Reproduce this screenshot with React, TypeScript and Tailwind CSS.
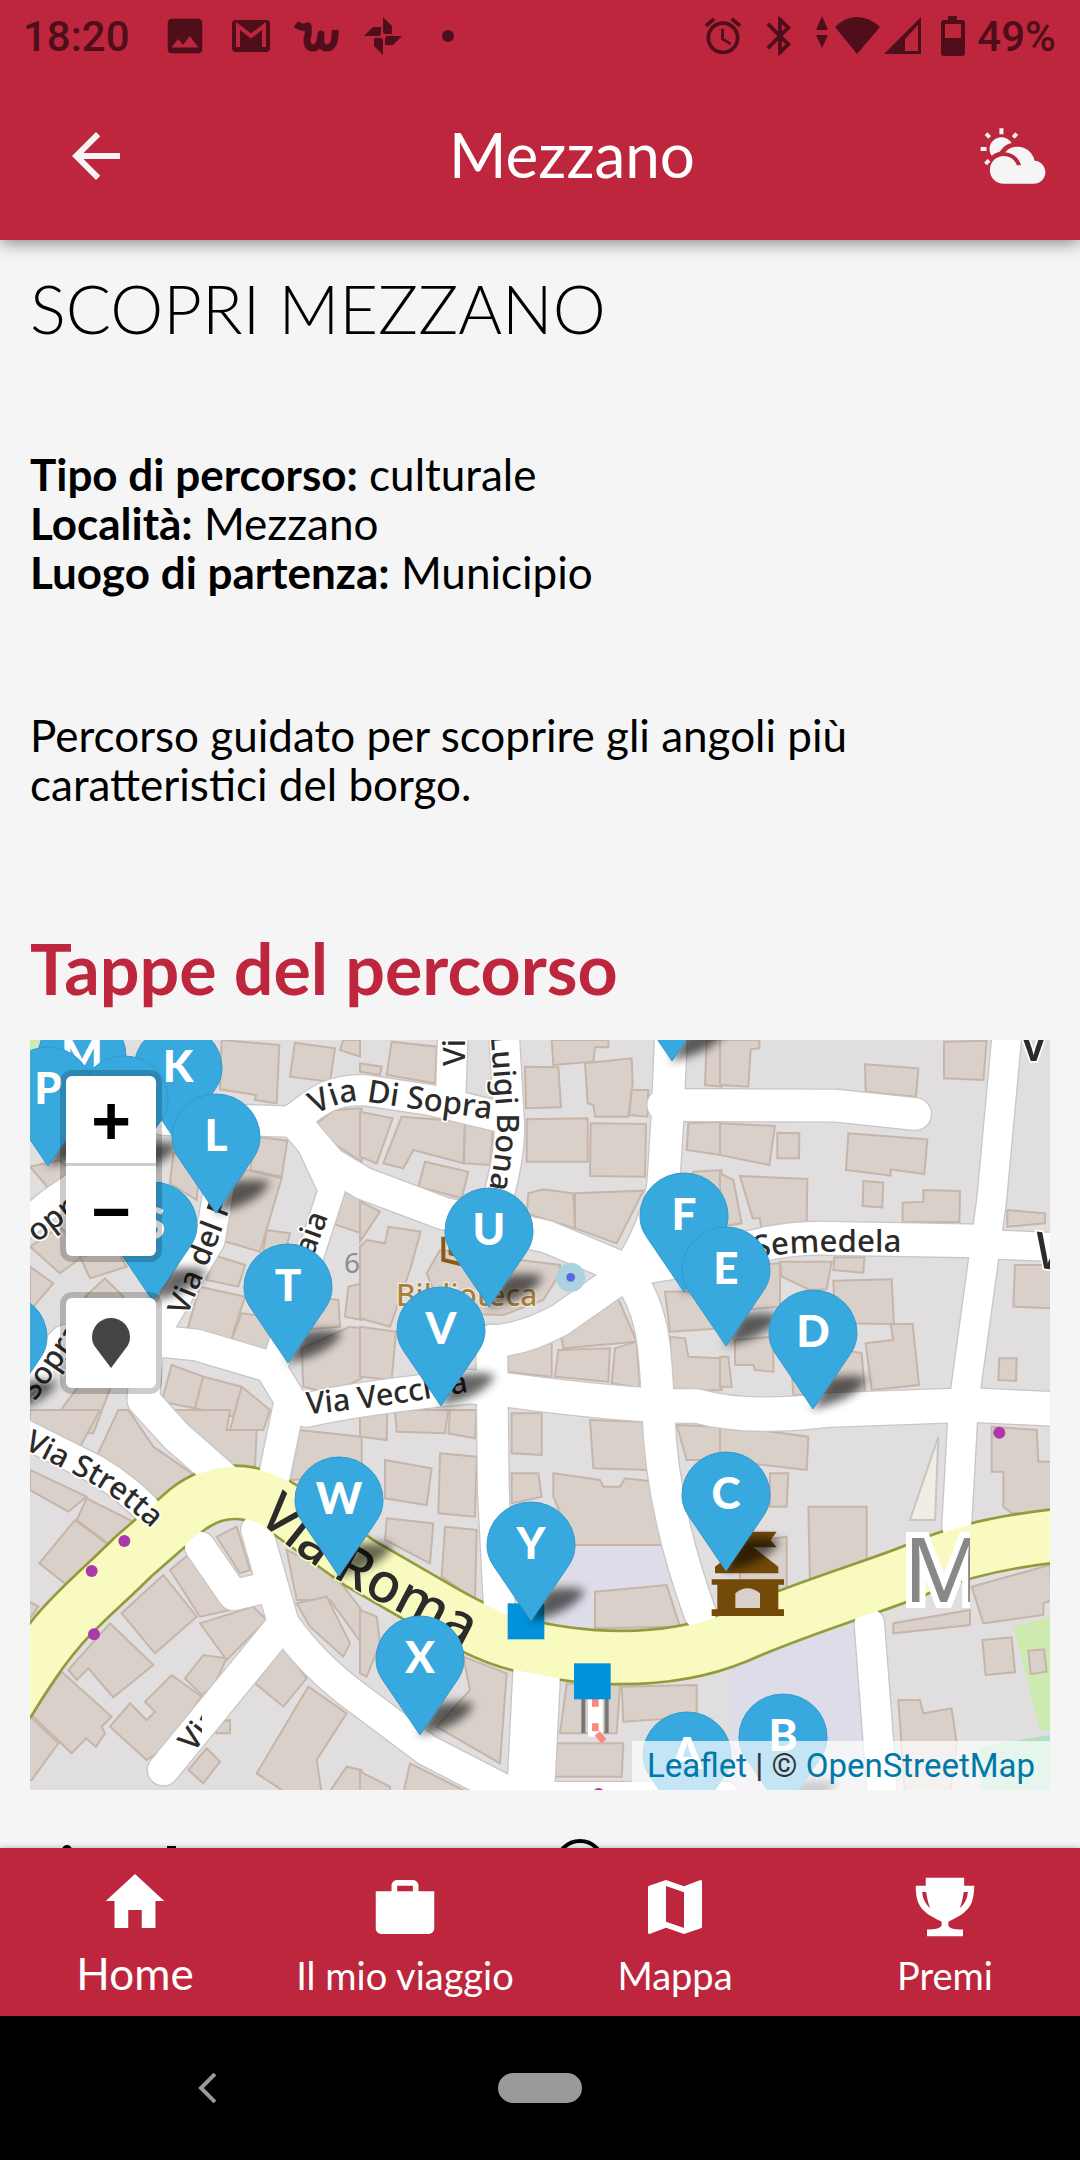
import type { ReactNode } from 'react';
import { IoMdBriefcase, IoMdHome, IoMdMap, IoMdPartlySunny, IoMdTrophy } from 'react-icons/io';
import { MdAlarm, MdArrowBack, MdBluetooth, MdImage } from 'react-icons/md';

interface Stop {
  letter: string;
  x: number;
  y: number;
}

interface Tile {
  x: number;
  y: number;
  buildings: string[];
}

// Map drawing units, three per pixel at full width
const MAP_W = 3060;
const MAP_H = 2250;

// x / y is the tip of each pin, in a 1020 x 750 map
const stops: Stop[] = [
  { letter: '', x: 642, y: 21 },
  { letter: 'M', x: 52, y: 92 },
  { letter: 'K', x: 148, y: 104 },
  { letter: 'P', x: 18, y: 126 },
  { letter: '', x: 94, y: 135 },
  { letter: 'L', x: 186, y: 173 },
  { letter: 'F', x: 654, y: 252 },
  { letter: 'S', x: 123, y: 261 },
  { letter: 'U', x: 459, y: 267 },
  { letter: 'E', x: 696, y: 306 },
  { letter: 'T', x: 258, y: 323 },
  { letter: 'V', x: 411, y: 366 },
  { letter: 'D', x: 783, y: 369 },
  { letter: '', x: -27, y: 373 },
  { letter: 'C', x: 696, y: 531 },
  { letter: 'W', x: 309, y: 536 },
  { letter: 'Y', x: 501, y: 581 },
  { letter: 'X', x: 390, y: 695 },
  { letter: 'B', x: 753, y: 773 },
  { letter: 'A', x: 657, y: 791 },
];

const tiles: Tile[] = [
  {
    x: -90,
    y: -60,
    buildings: [
      '665,60 838,75 830,250 765,240 768,225 660,208',
      '885,68 1005,85 990,185 870,170',
      '1030,60 1080,60 1080,110 1020,90',
      '945,315 1000,270 1085,265 1085,425 1000,370',
      '770,350 862,362 845,470 750,450',
      '520,400 600,420 590,540 510,490',
      '740,450 845,475 780,695 660,660 700,500',
      '800,630 870,640 850,720 790,690',
      '640,705 735,735 715,800 620,780',
      '600,800 735,830 690,970 560,935',
      '725,880 800,890 860,1000 800,1015 690,970',
      '1030,515 1085,530 1085,640 995,610',
      '1045,800 1085,790 1085,900 1035,890',
      '940,830 1015,840 1020,920 900,930',
      '905,985 1050,920 1085,925 1085,1075 990,1120 910,1100',
      '515,1035 610,1070 585,1165 485,1145',
      '610,1070 725,1100 700,1190 585,1165',
      '725,1100 810,1170 790,1230 690,1230',
      '90,680 180,620 260,700 180,760',
      '240,710 350,690 380,740 270,775',
      '90,740 160,790 100,860 90,860',
      '255,830 315,775 370,830 340,870',
      '90,440 180,420 240,480 150,510',
      '130,1240 250,1080 340,1080 280,1240',
    ],
  },
  {
    x: 990,
    y: -60,
    buildings: [
      '95,65 230,80 225,190 80,165',
      '0,130 65,140 60,165 0,155',
      '575,60 745,60 745,82 705,82 700,125 580,135',
      '495,140 595,142 603,262 498,265',
      '675,130 815,115 818,190 805,290 705,290 700,255 683,250',
      '815,210 865,210 862,290 808,285',
      '500,298 683,295 683,425 500,425',
      '692,310 858,312 855,470 690,468',
      '0,275 98,295 50,430 0,410',
      '125,290 315,305 310,430 160,390 130,445 70,430',
      '315,310 400,315 390,435 312,430',
      '195,425 325,455 305,535 175,500',
      '505,520 550,508 640,520 645,625 500,580',
      '645,520 850,512 770,670 645,625',
      '0,545 60,575 0,665',
      '85,620 182,635 150,750 90,920 0,895 0,680 20,660 75,670',
      '240,690 600,735 600,760 550,840 430,885 250,880 200,760',
      '0,920 108,935 95,1080 0,1070',
      '600,930 770,825 830,965 610,985',
      '438,990 575,955 575,1070 438,1055',
      '595,990 750,985 745,1085 585,1070',
      '765,985 830,965 840,1105 755,1090',
      '985,310 1085,305 1085,405 980,390',
      '1040,60 1085,60 1085,200 1035,195',
      '1000,455 1085,450 1085,620 960,640',
      '915,815 1085,815 1085,925 930,935',
      '930,950 975,955 985,1010 1085,1015 1085,1110 935,1115',
    ],
  },
  {
    x: 2070,
    y: -60,
    buildings: [
      '0,60 118,60 118,85 92,88 85,200 0,195',
      '435,133 595,145 588,230 437,215',
      '672,65 800,62 790,180 672,175',
      '0,310 165,318 148,435 0,405',
      '172,338 238,340 237,415 172,415',
      '385,340 622,358 613,462 512,448 512,467 378,450',
      '430,483 490,488 487,562 428,558',
      '548,548 610,545 610,510 720,513 718,606 548,606',
      '60,468 262,477 260,606 125,640 120,595 98,595',
      '0,460 40,480 65,610 0,620',
      '180,725 335,725 320,808 270,810 185,770',
      '343,712 433,712 430,758 340,750',
      '340,782 515,778 522,912 345,910',
      '100,735 180,730 180,860 60,870',
      '437,970 520,960 512,912 578,912 597,1095 455,1110',
      '45,960 160,950 160,1055 105,1050 100,1035 45,1035',
      '0,1010 25,1010 35,1100 0,1100',
      '215,1050 380,990 425,1000 435,1120 220,1125',
      '862,570 975,580 975,610 862,620',
      '885,735 995,735 995,865 880,860',
      '838,1015 890,1015 888,1083 835,1080',
    ],
  },
  {
    x: -90,
    y: 1110,
    buildings: [
      '90,0 300,0 235,120 90,50',
      '355,0 385,0 460,110 590,200 490,280 290,140',
      '90,180 260,260 205,305 90,240',
      '260,265 420,345 330,405 230,330',
      '225,330 330,408 200,525 118,460',
      '80,570 115,590 80,640',
      '365,610 490,495 590,620 465,730',
      '510,480 570,430 690,600 600,620',
      '205,780 330,640 460,765 340,862 265,775 230,810',
      '95,915 185,785 335,920 305,950 315,970 288,1010 258,985 215,1030',
      '80,910 175,1000 95,1110 80,1110',
      '330,950 390,880 440,930 465,905 435,875 515,795 605,860 500,1010 440,1050',
      '555,805 610,735 680,745 640,830 605,855',
      '600,640 760,590 800,630 680,750',
      '565,1080 620,1015 660,1055 610,1120',
      '765,820 850,710 920,805 850,890',
      '640,940 690,930 690,970 650,970',
      '860,420 1000,490 1085,600 1085,700 990,570 890,570',
      '890,580 980,560 1050,700 1030,740 930,650',
      '925,830 1040,910 950,1050 965,1150 860,1150 770,1090',
      '985,1150 1040,1070 1085,1080 1085,1150',
      '520,0 690,0 680,60 770,60 765,170 670,170 540,50',
      '895,60 1085,80 1085,200 870,210',
      '650,380 710,350 750,480 720,490',
    ],
  },
  {
    x: 990,
    y: 1110,
    buildings: [
      '0,10 82,10 80,90 0,80',
      '105,0 265,0 255,70 110,65',
      '270,0 350,0 345,85 265,70',
      '455,10 545,10 545,135 455,130',
      '690,30 850,35 865,180 700,175',
      '950,45 1085,50 1085,150 980,150',
      '75,150 215,175 200,285 75,265',
      '240,130 350,140 345,320 235,310',
      '455,190 535,190 545,260 455,280',
      '580,190 720,210 730,230 780,230 795,205 885,215 940,330 935,405 640,405 580,260',
      '80,325 220,340 210,460 75,390',
      '255,350 350,360 345,570 245,500',
      '705,545 920,525 960,650 705,655',
      '0,600 50,620 60,700 20,800 0,790',
      '310,740 440,790 420,1060 230,950 330,840',
      '620,820 780,825 770,970 600,970',
      '785,830 1010,825 1010,920 790,935',
      '590,1000 790,1000 785,1100 580,1100',
      '0,1085 90,1130 90,1150 0,1150',
      '150,1060 330,1150 130,1150',
    ],
  },
  {
    x: 2070,
    y: 1110,
    buildings: [
      '0,45 265,80 260,180 0,150',
      '150,190 205,190 200,290 150,290',
      '265,290 440,290 440,450 270,520',
      '60,400 200,380 200,540 60,540',
      '815,50 950,60 955,155 995,155 995,305 875,310 850,290 850,185 815,185',
      '520,640 750,600 750,645 520,670',
      '755,530 990,465 995,570 970,580 970,615 790,640',
      '787,690 875,682 885,787 797,795',
      '925,722 972,718 980,785 932,792',
      '535,870 600,870 610,910 695,895 710,1000 690,1150 555,1150',
    ],
  },
];

const roads: { d: string; width: number }[] = [
  { d: 'M400,240 L640,240 L780,245 C850,200 880,150 1000,150 L1200,180 L1400,228', width: 90 },
  { d: 'M1420,-60 L1438,250 Q1442,340 1400,490', width: 88 },
  { d: 'M1270,-60 L1262,170', width: 88 },
  { d: 'M790,240 L900,370 L1000,430 L1240,520 L1550,590 L1790,690', width: 95 },
  { d: 'M1790,700 L1590,840 Q1480,900 1380,905', width: 95 },
  { d: 'M1925,-60 L1912,240 L1900,430 Q1880,560 1790,700', width: 95 },
  { d: 'M1900,195 L2420,197 L2655,222', width: 95 },
  { d: 'M1790,690 L2100,640 Q2250,590 2400,595 L2850,603', width: 98 },
  { d: 'M2935,-60 L2885,480 L2800,1100 L2780,1460', width: 86 },
  { d: 'M2850,612 L3100,622', width: 84 },
  { d: 'M1790,700 C1880,820 1875,950 1885,1110 C1890,1300 1930,1500 2010,1720', width: 95 },
  { d: 'M830,1110 Q1010,1070 1320,1040 L1430,1050 Q1800,1100 2000,1098 Q2150,1140 2400,1110 L2820,1095 L3100,1108', width: 100 },
  { d: 'M340,940 L540,600 L600,250', width: 88 },
  { d: 'M740,960 L905,450 L830,290', width: 78 },
  { d: 'M260,890 L500,915 L720,980 L780,1080 L720,1370', width: 92 },
  { d: 'M350,950 L340,1080 L440,1190 L600,1330', width: 95 },
  { d: 'M1385,900 L1390,1350 L1410,1740', width: 92 },
  { d: 'M1522,1860 L1500,2300', width: 140 },
  { d: 'M680,1470 L760,1750 Q850,1880 990,1980 L1190,2130 L1480,2280', width: 92 },
  { d: 'M510,1520 L610,1665 L720,1640', width: 90 },
  { d: 'M760,1750 L400,2190', width: 92 },
  { d: 'M-60,590 L60,490 L250,360', width: 84 },
  { d: 'M-60,1070 L100,900 L330,830', width: 84 },
  { d: 'M-60,1160 L200,1290 Q300,1350 370,1430', width: 84 },
  { d: 'M2518,1750 L2560,2300', width: 88 },
  { d: 'M1500,2256 L2090,2256', width: 60 },
];

const mainRoad =
  'M-60,1980 C90,1730 160,1700 310,1550 L470,1410 C560,1340 660,1340 760,1405 L990,1570 L1190,1685 C1350,1780 1450,1830 1690,1850 C1850,1860 2000,1840 2120,1790 C2320,1700 2600,1620 2680,1580 Q2850,1510 3100,1485';

const purpleDots = [
  [283, 1503],
  [185, 1593],
  [192, 1783],
  [2908, 1178],
];

const streetLabels: { id: string; d: string; name: string; size: number }[] = [
  { id: 'sopra', d: 'M856,225 Q930,180 1000,183 Q1200,215 1450,245', name: 'Via Di Sopra', size: 94 },
  { id: 'bona', d: 'M1382,-16 L1398,200 Q1408,330 1365,500', name: 'Luigi Bona', size: 92 },
  { id: 'vi', d: 'M1305,78 L1305,-200', name: 'Via', size: 92 },
  { id: 'del', d: 'M470,830 L560,610 L660,350', name: 'Via del P', size: 92 },
  { id: 'aia', d: 'M850,650 L930,430', name: 'aia', size: 92 },
  { id: 'opra', d: 'M20,610 L190,480', name: 'opra', size: 92 },
  { id: 'sopra-left', d: 'M15,1085 L180,850', name: 'Sopra', size: 92 },
  { id: 'vecchia', d: 'M830,1122 Q1010,1112 1400,1040', name: 'Via Vecchia', size: 92 },
  { id: 'stretta', d: 'M-20,1225 L150,1312 Q270,1370 400,1500', name: 'Via Stretta', size: 92 },
  { id: 'roma', d: 'M680,1435 Q820,1570 990,1655 L1400,1870', name: 'Via Roma', size: 165 },
  { id: 'semedela', d: 'M2175,655 Q2280,637 2370,637 L2760,637', name: 'Semedela', size: 94 },
];

function MapTiles() {
  return (
    <svg
      viewBox={`0 0 ${MAP_W} ${MAP_H}`}
      className="block h-full w-full"
      fontFamily='"Noto Sans", sans-serif'
      aria-hidden="true"
    >
      <defs>
        {streetLabels.map((label) => (
          <path key={label.id} id={`street-${label.id}`} d={label.d} />
        ))}
        <clipPath id="west-tile">
          <rect x="0" y="1116" width="516" height="1134" />
        </clipPath>
        <clipPath id="east-tile">
          <rect x="2500" y="1116" width="320" height="1134" />
        </clipPath>
      </defs>

      <rect width={MAP_W} height={MAP_H} fill="#e0dedf" />
      <path d="M0,0 H35 L0,35 Z" fill="#cdebb0" />
      <path d="M2950,1760 L3060,1730 V2070 L3030,2070 Z" fill="#cdebb0" />
      <path d="M2850,2120 L3060,2085 V2250 H2850 Z" fill="#aedfc2" />
      <path d="M1630,1520 H1930 L1915,1640 L1690,1660 V1780 H1540 Z" fill="#dddce8" />
      <path d="M2100,1860 L2465,1760 L2510,2120 V2250 H2100 Z" fill="#dddce8" />
      <path d="M2725,1190 L2715,1440 H2640 Z" fill="#f0ede5" stroke="#c8c6c5" strokeWidth="6" />

      {tiles.map((tile) => (
        <g key={`${tile.x}-${tile.y}`} transform={`translate(${tile.x} ${tile.y})`}>
          {tile.buildings.map((points) => (
            <polygon key={points} points={points} fill="#d9d0c9" stroke="#c6b5a8" strokeWidth="6" />
          ))}
        </g>
      ))}

      <g fill="none" strokeLinecap="round" strokeLinejoin="round">
        {roads.map((road) => (
          <path key={road.d} d={road.d} stroke="#c9c7c6" strokeWidth={road.width + 8} />
        ))}
        <path d={mainRoad} stroke="#939c3c" strokeWidth="168" />
        {roads.map((road) => (
          <path key={road.d} d={road.d} stroke="#ffffff" strokeWidth={road.width} />
        ))}
        <path d={mainRoad} stroke="#f8fabf" strokeWidth="152" />
      </g>

      {purpleDots.map(([x, y]) => (
        <circle key={`${x}-${y}`} cx={x} cy={y} r="18" fill="#ac39ac" />
      ))}

      <circle cx="1622" cy="712" r="44" fill="#aad3df" />
      <circle cx="1622" cy="712" r="13" fill="#5b68e0" />

      {/* library */}
      <path d="M1240,590 V660 L1290,672 L1340,655 V600 M1262,585 V640 L1300,650" fill="none" stroke="#8a5a14" strokeWidth="12" />
      <text x="1098" y="797" fontSize="90" fontWeight="500" fill="#a8813c" stroke="#efe9e2" strokeWidth="8" paintOrder="stroke">
        Biblioteca
      </text>

      {/* town hall */}
      <g fill="#734a08">
        <path d="M2090,1475 H2240 L2222,1500 L2240,1522 H2170 L2245,1580 V1600 H2055 V1580 L2120,1530 H2090 Z" />
        <path d="M2045,1618 H2262 V1634 H2245 V1708 H2262 V1728 H2045 V1708 H2062 V1634 H2045 Z" />
      </g>
      <path d="M2116,1704 V1660 Q2152,1630 2190,1660 V1704 Z" fill="#d9d0c9" />

      {/* bus stops and the level crossing below them */}
      <rect x="1433" y="1690" width="110" height="108" fill="#0092da" />
      <path d="M1660,1970 V2080 M1730,1970 V2080" stroke="#777777" strokeWidth="12" />
      <rect x="1674" y="1970" width="44" height="120" fill="#ffffff" />
      <path d="M1696,1976 V2000 M1696,2050 V2074 M1702,2080 L1722,2104" stroke="#fa8a80" strokeWidth="20" />
      <rect x="1632" y="1870" width="110" height="108" fill="#0092da" />
      <circle cx="1706" cy="2262" r="18" fill="#ac39ac" />

      <text x="942" y="698" fontSize="84" fill="#8d8d8d">
        6
      </text>

      <g fill="#2b2b2b" fontWeight="500" stroke="#ffffff" strokeWidth="10" paintOrder="stroke">
        {streetLabels.map((label) => (
          <text
            key={label.id}
            fontSize={label.size}
            stroke={label.id === 'roma' ? '#f8fabf' : '#ffffff'}
          >
            <textPath href={`#street-${label.id}`}>{label.name}</textPath>
          </text>
        ))}
        <g clipPath="url(#west-tile)">
          <text fontSize="92" transform="translate(490 2140) rotate(-52)">
            Via
          </text>
        </g>
        <text x="2965" y="62" fontSize="150">
          Via
        </text>
        <text fontSize="150" transform="translate(3005 680) rotate(8)">
          V
        </text>
      </g>
      <g clipPath="url(#east-tile)">
        <text x="2620" y="1685" fontSize="270" fill="#888888" stroke="#ffffff" strokeWidth="36" paintOrder="stroke">
          M
        </text>
      </g>
    </svg>
  );
}

function Pin({ stop }: { stop: Stop }) {
  return (
    <button
      type="button"
      aria-label={stop.letter ? `Tappa ${stop.letter}` : 'Tappa'}
      className="absolute h-[119px] w-[88px] -translate-x-1/2 -translate-y-full"
      style={{ left: `${(stop.x / 1020) * 100}%`, top: `${(stop.y / 750) * 100}%` }}
    >
      <svg viewBox="0 0 88 119" className="absolute inset-0 h-full w-full overflow-visible">
        <path d="M42,120 L60,88 Q80,84 98,88 Q92,102 68,112 Z" fill="#000000" className="opacity-60 blur-[5px]" />
        <path
          d="M44,119 L8,66 C3,59 0,52 0,43 A44,43 0 0 1 88,43 C88,52 85,59 80,66 Z"
          fill="#38a9de"
          stroke="#3399cc"
          strokeWidth="1"
        />
      </svg>
      <span className="relative block h-full pt-[15px] text-[44px] leading-[50px] font-black text-white">
        {stop.letter}
      </span>
    </button>
  );
}

function StatusBar() {
  return (
    <div className="flex h-[72px] items-center justify-between pr-6 pl-[23px] font-['Roboto'] text-[42px] font-medium text-[#4f0e19]">
      <div className="flex items-center">
        <span>18:20</span>
        <MdImage size={46} className="ml-8" />
        <svg viewBox="0 0 38 32" className="ml-6 h-8 w-[38px]">
          <rect width="38" height="32" rx="4" fill="currentColor" />
          <path d="M6,27 V6 L19,16 L32,6 V27" fill="none" stroke="#bd263d" strokeWidth="4" />
        </svg>
        <svg viewBox="0 0 46 32" className="ml-6 h-8 w-[46px]" fill="none" stroke="currentColor" strokeWidth="7" strokeLinejoin="round">
          <path d="M2,4 Q8,9 14,6 Q15,14 13,19 Q13,28 19,28 Q26,28 27,14 Q25,28 33,28 Q42,27 41,10" />
        </svg>
        <svg viewBox="0 0 38 38" className="ml-6 h-[38px] w-[38px]" fill="currentColor">
          <path d="M19,0 L28,9 V17 H22 Q19,17 19,14 Z M38,19 L29,28 H21 V22 Q21,19 24,19 Z M19,38 L10,29 V21 H16 Q19,21 19,24 Z M0,19 L9,10 H17 V16 Q17,19 14,19 Z" />
        </svg>
        <span className="ml-10 h-3 w-3 rounded-full bg-[#4f0e19]" />
      </div>
      <div className="flex items-center">
        <MdAlarm size={44} />
        <MdBluetooth size={46} className="ml-3" />
        <svg viewBox="0 0 106 40" className="ml-3 h-10 w-[106px]" fill="currentColor">
          <path d="M7,0 L13,14 H1 Z M1,19 H13 L7,32 Z" />
          <path d="M42,38 L20,11 Q30,1 42,1 Q54,1 65,11 Z" />
          <path fillRule="evenodd" d="M69,38 L106,1 V38 Z M90,23 V35 H103 V9 Z" />
        </svg>
        <svg viewBox="0 0 24 40" className="ml-5 h-10 w-6" fill="currentColor">
          <path fillRule="evenodd" d="M7,0 H16 V4 H22 L24,6 V37 Q24,40 21,40 H3 Q0,40 0,37 V6 L2,4 H7 Z M4,8 V22 H20 V8 Z" />
        </svg>
        <span className="ml-3">49%</span>
      </div>
    </div>
  );
}

function NavItem({ icon, label, active }: { icon: ReactNode; label: string; active?: boolean }) {
  return (
    <a
      href="#"
      className={
        active
          ? 'flex flex-1 flex-col items-center gap-2 pt-[17px] text-[44px] leading-[56px]'
          : 'flex flex-1 flex-col items-center gap-2 pt-[23px] text-[38px] leading-[48px]'
      }
    >
      {icon}
      <span>{label}</span>
    </a>
  );
}

export default function App() {
  return (
    <div className="flex h-screen flex-col bg-[#f5f5f5] font-['Lato',sans-serif] text-black">
      <header className="relative z-10 bg-[#bd263d] shadow-[0_3px_16px_rgba(0,0,0,0.45)]">
        <StatusBar />
        <div className="flex h-[168px] items-center justify-between pr-[30px] pl-[60px] text-[#f5f5f5]">
          <button type="button" aria-label="Indietro" className="w-[108px]">
            <MdArrowBack size={72} />
          </button>
          <h1 className="pb-1 text-[62px] leading-none font-normal text-white">Mezzano</h1>
          <button type="button" aria-label="Meteo">
            <IoMdPartlySunny size={74} />
          </button>
        </div>
      </header>

      <main className="flex-1 overflow-hidden px-[30px] pt-7">
        <h2 className="text-[67px] leading-[80px] font-light">SCOPRI MEZZANO</h2>

        <p className="mt-[102px] text-[44px] leading-[49px] font-normal">
          <strong className="font-bold">Tipo di percorso:</strong> culturale
          <br />
          <strong className="font-bold">Località:</strong> Mezzano
          <br />
          <strong className="font-bold">Luogo di partenza:</strong> Municipio
        </p>

        <p className="mt-[114px] max-w-[900px] text-[44px] leading-[49px] font-normal">
          Percorso guidato per scoprire gli angoli più caratteristici del borgo.
        </p>

        <h2 className="mt-[119px] text-[70px] leading-[80px] font-bold text-[#bd263d]">Tappe del percorso</h2>

        <div className="relative mt-8 aspect-[34/25] w-full overflow-hidden">
          <MapTiles />
          {stops.map((stop) => (
            <Pin key={`${stop.x}-${stop.y}`} stop={stop} />
          ))}

          <div className="absolute top-[30px] left-[30px] flex flex-col gap-[30px]">
            <div className="flex flex-col rounded-xl border-[6px] border-black/20 bg-white bg-clip-padding font-['Liberation_Sans'] text-[68px] leading-none font-bold">
              <button type="button" aria-label="Zoom in" className="h-[90px] w-[90px] border-b-[3px] border-[#cccccc]">
                +
              </button>
              <button type="button" aria-label="Zoom out" className="h-[90px] w-[90px]">
                −
              </button>
            </div>
            <button
              type="button"
              aria-label="Centra mappa"
              className="flex h-[102px] w-[102px] items-center justify-center rounded-xl border-[6px] border-black/20 bg-white bg-clip-padding"
            >
              <svg viewBox="0 0 38 50" className="h-[50px] w-[38px]" fill="#444444">
                <path d="M19,50 L4,30 C1,26 0,23 0,19 A19,19 0 0 1 38,19 C38,23 37,26 34,30 Z" />
              </svg>
            </button>
          </div>

          <div className="absolute right-0 bottom-0 bg-white/70 px-[15px] font-['Roboto'] text-[33px] leading-[49px] text-[#333333]">
            <a href="#" className="text-[#0078a8]">
              Leaflet
            </a>{' '}
            | ©{' '}
            <a href="#" className="text-[#0078a8]">
              OpenStreetMap
            </a>
          </div>
        </div>

        {/* first row of the list, mostly under the tab bar */}
        <svg viewBox="0 0 1020 60" className="mt-12 block w-full">
          <circle cx="37" cy="12" r="5" />
          <rect x="137" y="8" width="9" height="40" />
          <circle cx="550" cy="26" r="23" fill="none" stroke="#000000" strokeWidth="4" />
        </svg>
      </main>

      <nav className="relative z-10 flex h-[168px] shrink-0 bg-[#bd263d] font-normal text-white shadow-[0_0_6px_rgba(0,0,0,0.3)]">
        <NavItem icon={<IoMdHome size={72} />} label="Home" active />
        <NavItem icon={<IoMdBriefcase size={72} />} label="Il mio viaggio" />
        <NavItem icon={<IoMdMap size={72} />} label="Mappa" />
        <NavItem icon={<IoMdTrophy size={72} />} label="Premi" />
      </nav>

      <div className="grid h-36 shrink-0 grid-cols-[1fr_auto_1fr] items-center bg-black">
        <button type="button" aria-label="Indietro" className="ml-[198px] justify-self-start">
          <svg viewBox="0 0 18 30" className="h-[30px] w-[18px]" fill="none" stroke="#999999" strokeWidth="4">
            <path d="M17,1 L3,15 L17,29" />
          </svg>
        </button>
        <button type="button" aria-label="Schermata principale" className="h-[30px] w-[84px] rounded-full bg-[#999999]" />
      </div>
    </div>
  );
}
